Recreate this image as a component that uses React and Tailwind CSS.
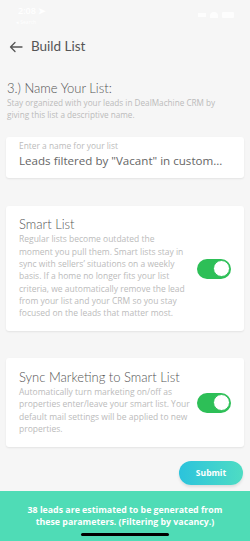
import React from "react";

function Toggle() {
  return (
    <div className="w-[34px] h-[20px] shrink-0 rounded-full bg-[#2dbf57] p-[1.5px] flex justify-end">
      <div className="w-[17px] h-[17px] rounded-full bg-white border border-[#2dbf57]" />
    </div>
  );
}

function OptionCard({ title, text, height, textWidth }) {
  return (
    <div className={`mx-[6px] bg-white rounded-[3px] shadow-[0_1px_2px_rgba(0,0,0,0.08)] pl-[13px] pr-[13px] flex items-center justify-between ${height}`}>
      <div className={textWidth}>
        <div className="font-['Lato'] font-light text-[13px] text-[#555] leading-[15px] whitespace-nowrap">{title}</div>
        <p className="font-['Open_Sans'] text-[8.5px] leading-[12.3px] text-[#bbb] mt-[1px]">{text}</p>
      </div>
      <Toggle />
    </div>
  );
}

export default function App() {
  return (
    <div className="w-[250px] h-[541px] bg-[#f6f6f6] flex flex-col overflow-hidden font-['Open_Sans',sans-serif]">
      {/* status bar */}
      <div className="h-[30px] flex justify-between px-[16px] pt-[5px] text-white">
        <div>
          <div className="text-[9px] font-semibold leading-[11px] pl-[2px]">2:08 ➤</div>
          <div className="text-[5px] leading-[8px] mt-[2px]">◂ Search</div>
        </div>
        <div className="flex items-center gap-[4px] h-[12px] mt-[4px]">
          <div className="w-[8px] h-[4px] bg-white/80" />
          <div className="w-[8px] h-[6px] bg-white/80 rounded-t-full" />
          <div className="w-[12px] h-[6px] bg-white/80 rounded-[1px]" />
        </div>
      </div>

      {/* header */}
      <div className="h-[32px] flex items-center gap-[8px] pl-[9px] pt-[2px]">
        <svg width="14" height="12" viewBox="0 0 14 12" fill="none" stroke="#555" strokeWidth="1.3" strokeLinecap="round" strokeLinejoin="round">
          <path d="M13 6H1.5M6 1.5L1.5 6 6 10.5" />
        </svg>
        <span className="font-['Lato'] text-[13.5px] text-[#555] leading-none">Build List</span>
      </div>

      {/* step heading */}
      <div className="px-[7px] pt-[19px]">
        <div className="font-['Lato'] font-light text-[13px] text-[#555] leading-[15px]">3.) Name Your List:</div>
        <p className="w-[222px] text-[8.2px] leading-[12px] text-[#bbb] mt-[1px]">
          Stay organized with your leads in DealMachine CRM by giving this list a descriptive name.
        </p>
      </div>

      {/* input card */}
      <div className="mx-[6px] mt-[16px] h-[41px] bg-white rounded-[3px] shadow-[0_1px_2px_rgba(0,0,0,0.08)] px-[13px] pt-[3px]">
        <div className="text-[8.4px] text-[#bbb] leading-[11px]">Enter a name for your list</div>
        <div className="text-[11.6px] text-[#666] leading-[15px] mt-[2px] whitespace-nowrap">
          Leads filtered by "Vacant" in custom...
        </div>
      </div>

      <div className="h-[28px] shrink-0" />
      <OptionCard
        height="h-[125px]"
        textWidth="w-[170px]"
        title="Smart List"
        text="Regular lists become outdated the moment you pull them. Smart lists stay in sync with sellers’ situations on a weekly basis. If a home no longer fits your list criteria, we automatically remove the lead from your list and your CRM so you stay focused on the leads that matter most."
      />

      <div className="h-[27px] shrink-0" />
      <OptionCard
        height="h-[89px]"
        textWidth="w-[176px]"
        title="Sync Marketing to Smart List"
        text="Automatically turn marketing on/off as properties enter/leave your smart list. Your default mail settings will be applied to new properties."
      />

      <div className="flex justify-end px-[7px] mt-[14px]">
        <button className="w-[64px] h-[24px] rounded-full bg-gradient-to-r from-[#2bc3dc] to-[#4edcc3] text-white text-[8.5px] font-bold shadow-[0_2px_3px_rgba(0,0,0,0.1)]">
          Submit
        </button>
      </div>

      <div className="mt-[6px] flex-1 bg-[#4fdcb6] flex flex-col items-center pt-[13px]">
        <p className="text-white text-[8.8px] font-bold leading-[12px] text-center px-[22px]">
          38 leads are estimated to be generated from these parameters. (Filtering by vacancy.)
        </p>
        <div className="w-[88px] h-[3px] bg-black rounded-full mt-[5px]" />
      </div>
    </div>
  );
}
